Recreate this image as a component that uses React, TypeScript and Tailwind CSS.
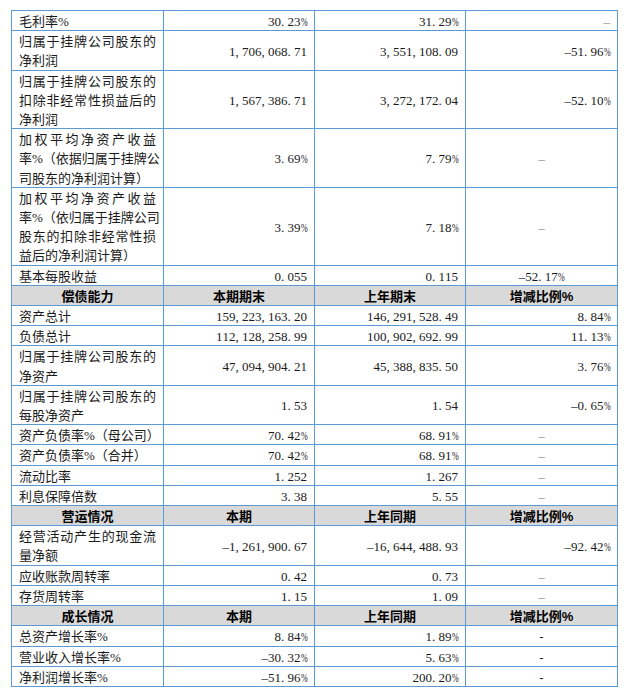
import React from 'react';

type Align = 'right' | 'center';

interface Row {
  label: string[];
  cur: string;
  prev: string;
  change: string;
  changeAlign?: Align;
}

interface Section {
  header?: string[];
  rows: Row[];
}

// dash used for "no value" cells
const GRAY = '–';
const DARK = '-';

const sections: Section[] = [
  {
    rows: [
      { label: ['毛利率%'], cur: '30.23%', prev: '31.29%', change: GRAY, changeAlign: 'right' },
      { label: ['归属于挂牌公司股东的', '净利润'], cur: '1,706,068.71', prev: '3,551,108.09', change: '-51.96%' },
      {
        label: ['归属于挂牌公司股东的', '扣除非经常性损益后的', '净利润'],
        cur: '1,567,386.71',
        prev: '3,272,172.04',
        change: '-52.10%',
      },
      {
        label: ['加权平均净资产收益', '率%（依据归属于挂牌公', '司股东的净利润计算）'],
        cur: '3.69%',
        prev: '7.79%',
        change: GRAY,
        changeAlign: 'center',
      },
      {
        label: ['加权平均净资产收益', '率%（依归属于挂牌公司', '股东的扣除非经常性损', '益后的净利润计算）'],
        cur: '3.39%',
        prev: '7.18%',
        change: GRAY,
        changeAlign: 'center',
      },
      { label: ['基本每股收益'], cur: '0.055', prev: '0.115', change: '-52.17%', changeAlign: 'center' },
    ],
  },
  {
    header: ['偿债能力', '本期期末', '上年期末', '增减比例%'],
    rows: [
      { label: ['资产总计'], cur: '159,223,163.20', prev: '146,291,528.49', change: '8.84%' },
      { label: ['负债总计'], cur: '112,128,258.99', prev: '100,902,692.99', change: '11.13%' },
      { label: ['归属于挂牌公司股东的', '净资产'], cur: '47,094,904.21', prev: '45,388,835.50', change: '3.76%' },
      { label: ['归属于挂牌公司股东的', '每股净资产'], cur: '1.53', prev: '1.54', change: '-0.65%' },
      { label: ['资产负债率%（母公司）'], cur: '70.42%', prev: '68.91%', change: GRAY, changeAlign: 'center' },
      { label: ['资产负债率%（合并）'], cur: '70.42%', prev: '68.91%', change: GRAY, changeAlign: 'center' },
      { label: ['流动比率'], cur: '1.252', prev: '1.267', change: GRAY, changeAlign: 'center' },
      { label: ['利息保障倍数'], cur: '3.38', prev: '5.55', change: GRAY, changeAlign: 'center' },
    ],
  },
  {
    header: ['营运情况', '本期', '上年同期', '增减比例%'],
    rows: [
      {
        label: ['经营活动产生的现金流', '量净额'],
        cur: '-1,261,900.67',
        prev: '-16,644,488.93',
        change: '-92.42%',
      },
      { label: ['应收账款周转率'], cur: '0.42', prev: '0.73', change: GRAY, changeAlign: 'center' },
      { label: ['存货周转率'], cur: '1.15', prev: '1.09', change: GRAY, changeAlign: 'center' },
    ],
  },
  {
    header: ['成长情况', '本期', '上年同期', '增减比例%'],
    rows: [
      { label: ['总资产增长率%'], cur: '8.84%', prev: '1.89%', change: DARK, changeAlign: 'center' },
      { label: ['营业收入增长率%'], cur: '-30.32%', prev: '5.63%', change: DARK, changeAlign: 'center' },
      { label: ['净利润增长率%'], cur: '-51.96%', prev: '200.20%', change: DARK, changeAlign: 'center' },
    ],
  },
];

// half-width figures, like the Song face of the original report
const Num = ({ v }: { v: string }) => {
  if (v === GRAY) {
    return <span className="font-['Liberation_Serif',serif] leading-none text-[#8c8c8c]">–</span>;
  }
  if (v === DARK) {
    return <span className="font-['Liberation_Sans',sans-serif] leading-none text-[#222]">-</span>;
  }
  return (
    <span className="font-['Liberation_Serif',serif] leading-none whitespace-nowrap text-[#1a1a1a]">
      {v.split('').map((c, i) => {
        if (c === ',' || c === '.') {
          return (
            <span key={i} className="inline-block w-[6.5px] text-left">
              {c}
            </span>
          );
        }
        if (c === '%') {
          return (
            <span key={i} className="inline-block w-[6.5px]">
              <span className="inline-block origin-left scale-x-[0.62]">%</span>
            </span>
          );
        }
        if (c === '-') {
          return (
            <span key={i} className="inline-block w-[6.5px] text-center">
              –
            </span>
          );
        }
        return (
          <span key={i} className="inline-block w-[6.5px] text-center">
            {c}
          </span>
        );
      })}
    </span>
  );
};

const Pct = ({ text, font }: { text: string; font: string }) => (
  <>
    {text.split('%').map((part, j, arr) => (
      <React.Fragment key={j}>
        {part}
        {j < arr.length - 1 && <span className={`${font} leading-none`}>%</span>}
      </React.Fragment>
    ))}
  </>
);

const Label = ({ lines }: { lines: string[] }) => (
  <div>
    {lines.map((l, i) => (
      <div
        key={i}
        className={
          i < lines.length - 1
            ? 'whitespace-nowrap text-justify [text-align-last:justify]'
            : 'whitespace-nowrap text-left'
        }
      >
        <Pct text={l} font="font-['Liberation_Serif',serif]" />
      </div>
    ))}
  </div>
);

const cell = 'border border-[#5b9bd5] px-[7px] py-0 align-middle';

export default function App() {
  return (
    <div className="min-h-screen bg-white pt-[10px] pl-[11px] text-[13px] leading-[19.2px] text-[#1a1a1a] font-['Noto_Sans_CJK_SC',sans-serif]">
      <table className="w-[606px] table-fixed border-collapse">
        <colgroup>
          <col className="w-[152px]" />
          <col className="w-[151px]" />
          <col className="w-[151px]" />
          <col className="w-[152px]" />
        </colgroup>
        <tbody>
          {sections.map((s, si) => (
            <React.Fragment key={si}>
              {s.header && (
                <tr className="bg-[#d9d9d9]">
                  {s.header.map((h, hi) => (
                    <td key={hi} className={`${cell} text-center font-bold text-black`}>
                      <Pct text={h} font="font-['Liberation_Sans',sans-serif]" />
                    </td>
                  ))}
                </tr>
              )}
              {s.rows.map((r, ri) => (
                <tr key={ri}>
                  <td className={cell}>
                    <Label lines={r.label} />
                  </td>
                  <td className={`${cell} text-right`}>
                    <Num v={r.cur} />
                  </td>
                  <td className={`${cell} text-right`}>
                    <Num v={r.prev} />
                  </td>
                  <td className={`${cell} ${r.changeAlign === 'center' ? 'text-center' : 'text-right'}`}>
                    <Num v={r.change} />
                  </td>
                </tr>
              ))}
            </React.Fragment>
          ))}
        </tbody>
      </table>
    </div>
  );
}
